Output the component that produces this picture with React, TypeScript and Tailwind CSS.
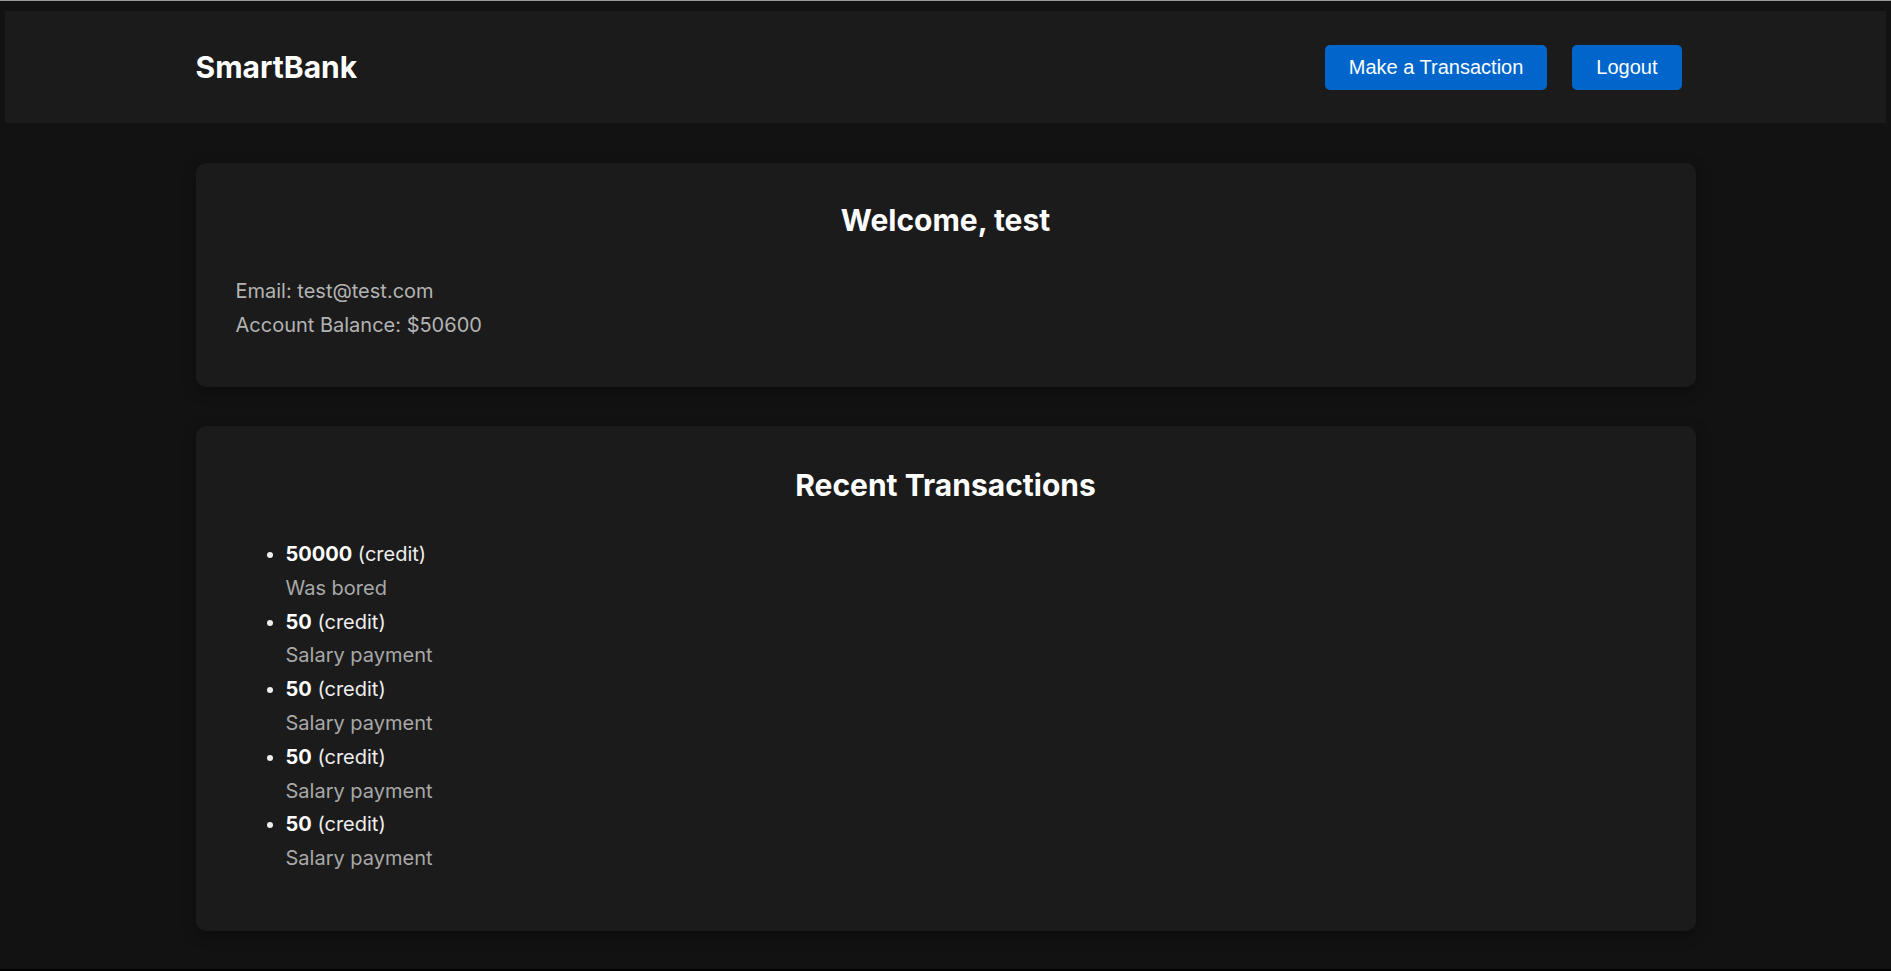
type Transaction = {
  amount: number;
  type: string;
  description: string;
};

const transactions: Transaction[] = [
  { amount: 50000, type: 'credit', description: 'Was bored' },
  { amount: 50, type: 'credit', description: 'Salary payment' },
  { amount: 50, type: 'credit', description: 'Salary payment' },
  { amount: 50, type: 'credit', description: 'Salary payment' },
  { amount: 50, type: 'credit', description: 'Salary payment' },
];

export default function App() {
  return (
    <div className="min-h-screen bg-[#121212] border-t border-t-[#9a9a9a] border-b-2 border-b-black font-['Inter',sans-serif] text-white">
      {/* Top nav */}
      <header className="mx-[5px] mt-[10px] h-[112px] bg-[#1b1b1b] flex items-center">
        <div className="w-full max-w-[1500px] mx-auto flex items-center justify-between pr-[14px]">
          <h1 className="text-[30px] font-bold leading-none">SmartBank</h1>
          <nav className="flex items-center gap-[25px]">
            <button className="h-[45px] px-6 rounded-[5px] bg-[#0066cc] text-[20px] text-white font-['Liberation_Sans',Arial,sans-serif]">
              Make a Transaction
            </button>
            <button className="h-[45px] px-6 rounded-[5px] bg-[#0066cc] text-[20px] text-white font-['Liberation_Sans',Arial,sans-serif]">
              Logout
            </button>
          </nav>
        </div>
      </header>

      <main className="max-w-[1500px] mx-auto pt-[40px] flex flex-col gap-[39px]">
        {/* Account summary */}
        <section className="bg-[#1b1b1b] rounded-[10px] shadow-[0_4px_14px_rgba(0,0,0,0.35)] px-[40px] pt-[40px] pb-[45px]">
          <h2 className="text-center text-[30px] font-bold leading-[35px] mb-[36px]">Welcome, test</h2>
          <p className="text-[20px] leading-[34px] text-[#b3b3b3]">Email: test@test.com</p>
          <p className="text-[20px] leading-[34px] text-[#b3b3b3]">Account Balance: $50600</p>
        </section>

        {/* Recent transactions */}
        <section className="bg-[#1b1b1b] rounded-[10px] shadow-[0_4px_14px_rgba(0,0,0,0.35)] px-[40px] pt-[42px] pb-[55px]">
          <h2 className="text-center text-[30px] font-bold leading-[35px] mb-[35px]">Recent Transactions</h2>
          <ul className="list-disc pl-[50px] text-[20px] leading-[33.8px]">
            {transactions.map((t, idx) => (
              <li key={idx} className="text-[#eeeeee]">
                <div>
                  <strong className="font-bold text-white">{t.amount}</strong> ({t.type})
                </div>
                <div className="text-[#a8a8a8]">{t.description}</div>
              </li>
            ))}
          </ul>
        </section>
      </main>
    </div>
  );
}
